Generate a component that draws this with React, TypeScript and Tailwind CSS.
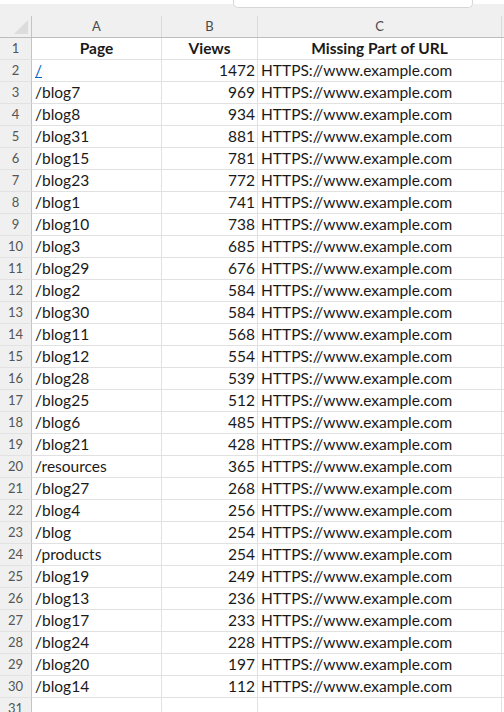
const rows: [string, number][] = [
  ["/", 1472],
  ["/blog7", 969],
  ["/blog8", 934],
  ["/blog31", 881],
  ["/blog15", 781],
  ["/blog23", 772],
  ["/blog1", 741],
  ["/blog10", 738],
  ["/blog3", 685],
  ["/blog29", 676],
  ["/blog2", 584],
  ["/blog30", 584],
  ["/blog11", 568],
  ["/blog12", 554],
  ["/blog28", 539],
  ["/blog25", 512],
  ["/blog6", 485],
  ["/blog21", 428],
  ["/resources", 365],
  ["/blog27", 268],
  ["/blog4", 256],
  ["/blog", 254],
  ["/products", 254],
  ["/blog19", 249],
  ["/blog13", 236],
  ["/blog17", 233],
  ["/blog24", 228],
  ["/blog20", 197],
  ["/blog14", 112],
];

const grid = "grid grid-cols-[32px_130px_96px_244px_1fr]";
const cell = "h-[22px] border-r border-b border-[#e1e1e1] flex items-center overflow-hidden whitespace-nowrap";
const rowHead =
  "h-[22px] bg-[#f0f0f0] border-r border-r-[#c4c4c4] border-b border-b-[#e2e2e2] flex items-center justify-center text-[13px] text-[#555]";

export default function App() {
  return (
    <div className="h-[712px] w-[504px] overflow-hidden bg-white text-[15.5px] text-[#1a1a1a] font-['Lato','Liberation_Sans',sans-serif]">
      {/* top strip */}
      <div className="relative h-[16px] bg-[#f0f0f0] border-t-[4px] border-white">
        <div className="absolute left-[233px] top-[-4px] h-[8px] w-[240px] rounded-b-[5px] border border-t-0 border-[#d6d6d6] bg-white" />
      </div>

      {/* column letters */}
      <div className={`${grid} h-[22px] bg-[#f0f0f0] border-b border-[#bdbdbd] text-[13px] text-[#4a4a4a]`}>
        <div className="relative border-r border-[#c4c4c4]">
          <svg className="absolute right-[3px] bottom-[3px]" width="14" height="14" viewBox="0 0 14 14">
            <path d="M14 0 L14 14 L0 14 Z" fill="#dcdcdc" />
          </svg>
        </div>
        {["A", "B", "C"].map((l) => (
          <div key={l} className="flex items-center justify-center border-r border-[#d9d9d9]">
            {l}
          </div>
        ))}
        <div />
      </div>

      {/* header row */}
      <div className={grid}>
        <div className={rowHead}>1</div>
        <div className={`${cell} justify-center font-bold`}>Page</div>
        <div className={`${cell} justify-center font-bold`}>Views</div>
        <div className={`${cell} justify-center font-bold`}>Missing Part of URL</div>
        <div className="h-[22px] border-b border-[#e1e1e1]" />
      </div>

      {rows.map(([page, views], i) => (
        <div key={i} className={grid}>
          <div className={rowHead}>{i + 2}</div>
          <div className={`${cell} pl-[3px]`}>
            {i === 0 ? <span className="text-[#0563c1] underline">{page}</span> : page}
          </div>
          <div className={`${cell} justify-end pr-[2px]`}>{views}</div>
          <div className={`${cell} pl-[3px]`}>HTTPS://www.example.com</div>
          <div className="h-[22px] border-b border-[#e1e1e1]" />
        </div>
      ))}

      <div className={grid}>
        <div className={rowHead}>31</div>
        <div className={cell} />
        <div className={cell} />
        <div className={cell} />
        <div className="h-[22px]" />
      </div>
    </div>
  );
}
